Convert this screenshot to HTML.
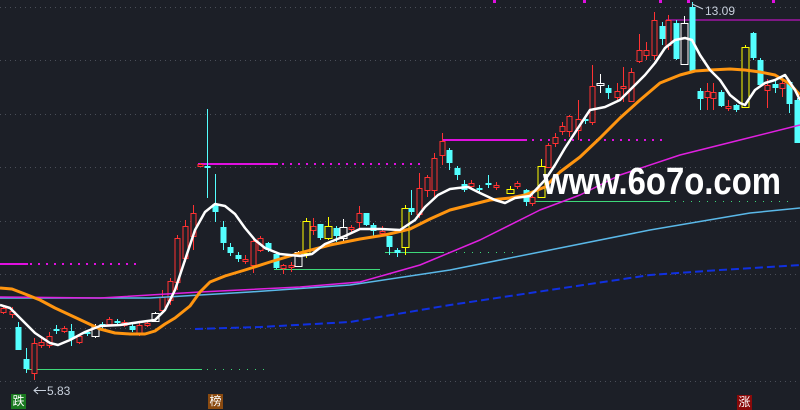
<!DOCTYPE html>
<html><head><meta charset="utf-8"><style>
html,body{margin:0;padding:0;background:#1c1f27;width:800px;height:410px;overflow:hidden}
svg{display:block}
.lb{position:absolute;font:12px "Liberation Sans","Noto Sans CJK SC",sans-serif;color:#fff;width:15px;height:15px;line-height:15px;text-align:center}
</style></head><body>
<svg id="s" width="800" height="410" viewBox="0 0 800 410" xmlns="http://www.w3.org/2000/svg" shape-rendering="crispEdges">
<g stroke="#4a4e58" stroke-width="1" stroke-dasharray="1,4">
<line x1="0" y1="7.5" x2="800" y2="7.5"/><line x1="0" y1="60.5" x2="800" y2="60.5"/><line x1="0" y1="114.5" x2="800" y2="114.5"/><line x1="0" y1="167.5" x2="800" y2="167.5"/><line x1="0" y1="221.5" x2="800" y2="221.5"/><line x1="0" y1="274.5" x2="800" y2="274.5"/><line x1="0" y1="328.5" x2="800" y2="328.5"/><line x1="0" y1="381.5" x2="800" y2="381.5"/>
</g>
<g stroke-width="2" fill="none">
<line x1="0" y1="264" x2="28" y2="264" stroke="#e010e0"/>
<line x1="30" y1="264" x2="140" y2="264" stroke="#e010e0" stroke-dasharray="2,6"/>
<line x1="198" y1="164" x2="278" y2="164" stroke="#e010e0"/>
<line x1="282" y1="164" x2="420" y2="164" stroke="#e010e0" stroke-dasharray="2,6"/>
<line x1="442" y1="140" x2="527" y2="140" stroke="#e010e0"/>
<line x1="532" y1="140" x2="662" y2="140" stroke="#e010e0" stroke-dasharray="2,6"/>
<line x1="666" y1="20" x2="800" y2="20" stroke="#e010e0" stroke-width="1"/>
</g>
<g stroke-width="1" fill="none">
<line x1="26" y1="369.5" x2="202" y2="369.5" stroke="#3ed87a"/>
<line x1="207" y1="369.5" x2="270" y2="369.5" stroke="#3ed87a" stroke-dasharray="1,7"/>
<line x1="274" y1="269.5" x2="380" y2="269.5" stroke="#3ed87a"/>
<line x1="385" y1="252.5" x2="444" y2="252.5" stroke="#3ed87a"/>
<line x1="448" y1="252.5" x2="520" y2="252.5" stroke="#3ed87a" stroke-dasharray="1,7"/>
<line x1="530" y1="201.5" x2="670" y2="201.5" stroke="#3ed87a"/>
<line x1="675" y1="201.5" x2="790" y2="201.5" stroke="#3ed87a" stroke-dasharray="1,7"/>
</g>
<g id="cd"></g>
<g fill="none" stroke-linejoin="round" shape-rendering="auto">
<polyline stroke="#1030e0" stroke-width="2" stroke-dasharray="8,4" points="195,329 260,327 350,322 450,305 550,290 650,275 720,270 800,265"/>
<polyline stroke="#5ab8e8" stroke-width="1.5" points="0,298 150,298 250,292 350,285 450,270 550,250 650,230 750,213 800,208"/>
<polyline stroke="#e020e0" stroke-width="1.5" points="0,297 100,298 200,292 300,287 360,282 420,265 480,240 540,210 580,195 620,175 680,155 740,140 800,125"/>
<polyline stroke="#ff9510" stroke-width="3" points="0,288 12,289 25,294 40,300 55,308 70,315 85,322 100,329 115,333 130,334 145,334 155,331 165,324 175,318 190,306 200,292 210,282 225,276 245,270 270,262 300,253 330,245 360,239 385,235 410,229 430,219 450,210 470,205 490,200 510,198 525,195 545,187 560,172 580,157 600,138 620,118 640,100 660,83 680,75 695,71 710,70 730,69 745,70 760,72 775,75 790,84 800,95"/>
<polyline stroke="#ffffff" stroke-width="2.5" points="0,305 10,308 20,318 35,333 50,343 58,345 70,340 85,332 100,326 120,325 140,322 155,320 165,310 175,290 185,260 195,230 205,212 215,204 225,206 235,214 245,228 255,240 265,248 280,254 300,256 312,254 325,244 345,236 360,229 380,229 400,230 415,220 425,207 438,195 450,189 458,188 468,187 480,193 495,200 505,203 515,198 530,196 545,180 555,165 565,148 580,125 590,110 605,107 620,100 635,85 645,75 655,63 665,48 675,40 685,38 692,40 700,55 710,70 720,80 730,95 740,103 745,105 755,90 765,83 775,80 785,75 795,90 800,100"/>
</g>
<g shape-rendering="auto">
<text x="543" y="194" fill="#ffffff" font-family="'Liberation Sans',sans-serif" font-weight="bold" font-size="38" textLength="238" lengthAdjust="spacingAndGlyphs">www.6o7o.com</text>
<text x="705" y="15" fill="#c8d0dc" font-family="'Liberation Sans',sans-serif" font-size="12">13.09</text>
<polyline points="692,4 703,9" stroke="#c8d0dc" fill="none"/>
<text x="47" y="395" fill="#c8d0dc" font-family="'Liberation Sans',sans-serif" font-size="12">5.83</text>
<line x1="34" y1="390.5" x2="46" y2="390.5" stroke="#c8d0dc"/>
<polyline points="38,387 34,390.5 38,394" stroke="#c8d0dc" fill="none"/>
</g>
<g fill="#e010e0"><rect x="493" y="0" width="3" height="3"/><rect x="583" y="0" width="3" height="3"/><rect x="659" y="0" width="3" height="3"/><rect x="687" y="0" width="3" height="3"/><rect x="772" y="0" width="3" height="3"/></g>
</svg>
<div class="lb" style="left:11px;top:394px;background:#1a7a20">跌</div>
<div class="lb" style="left:208px;top:394px;background:#8a4a10">榜</div>
<div class="lb" style="left:737px;top:395px;background:#8a0a0a">涨</div>
<script>
var d=[
[3,308,312,306,314,'r'],[12,311,314,307,318,'r'],[18,327,350,322,350,'c'],[26,359,369,348,373,'c'],[34,343,373,338,380,'r'],
[41,342,345,338,348,'r'],[49,336,345,332,348,'r'],[56,329,331,325,334,'c'],[64,328,331,326,333,'r'],[71,331,339,324,346,'c'],
[79,336,342,334,344,'r'],[87,332,334,330,336,'c'],[95,326,336,324,338,'w'],[102,324,326,322,329,'c'],[109,319,324,317,326,'r'],
[117,321,323,319,326,'c'],[124,322,325,320,327,'r'],[132,326,330,324,332,'c'],[139,325,334,322,336,'r'],[147,323,325,321,327,'r'],
[155,313,321,312,322,'w'],[162,297,310,290,314,'r'],[170,281,300,278,305,'r'],[177,238,282,235,290,'r'],[185,226,258,220,262,'r'],
[193,213,236,205,250,'r'],[200,164,166,163,167,'r'],[207,166,168,109,198,'c'],[215,204,212,174,222,'c'],[223,227,243,221,250,'c'],
[230,247,253,243,256,'c'],[238,255,259,252,262,'c'],[245,259,261,255,264,'r'],[253,241,265,237,273,'r'],[260,238,250,236,252,'r'],
[268,243,250,242,252,'c'],[276,254,268,252,269,'c'],[283,265,268,264,274,'r'],[291,265,267,262,272,'r'],[298,252,266,251,267,'w'],
[306,221,253,218,258,'y'],[313,226,230,218,235,'r'],[320,224,238,224,240,'c'],[328,226,238,217,240,'y'],[336,228,236,226,242,'c'],
[343,227,238,219,242,'w'],[351,227,229,225,232,'r'],[359,213,222,206,228,'r'],[366,213,225,213,226,'c'],[373,225,231,223,238,'c'],
[382,231,233,226,236,'r'],[389,236,247,236,255,'c'],[397,250,253,248,257,'c'],[405,208,247,205,255,'y'],[411,208,212,190,215,'c'],
[419,188,214,173,218,'r'],[427,177,190,175,197,'r'],[434,158,190,153,197,'r'],[442,141,155,133,165,'r'],[449,150,163,148,170,'c'],
[457,168,175,166,180,'c'],[464,184,190,180,192,'c'],[471,183,186,180,189,'r'],[479,188,190,185,193,'c'],[488,183,185,175,188,'c'],
[496,185,187,182,190,'r'],[510,189,193,186,194,'y'],[517,183,186,181,189,'r'],[526,190,202,189,206,'c'],[532,197,203,195,206,'r'],
[541,166,197,159,197,'y'],[548,145,167,143,168,'r'],[555,137,143,133,147,'r'],[562,126,131,122,135,'r'],[569,116,131,115,137,'r'],
[578,119,130,100,140,'r'],[585,119,121,116,124,'c'],[592,86,122,65,125,'r'],[600,83,85,74,93,'w'],[608,88,93,85,99,'c'],
[617,91,97,83,102,'r'],[623,86,88,67,102,'r'],[631,72,101,68,101,'r'],[639,50,61,34,63,'r'],[646,50,55,42,60,'r'],
[654,20,55,12,60,'r'],[662,26,39,22,45,'c'],[668,20,45,15,50,'r'],[676,23,59,20,60,'c'],[684,23,64,16,65,'w'],
[692,7,71,2,72,'c'],[700,91,99,88,110,'c'],[707,91,97,83,110,'r'],[713,92,98,83,110,'r'],[721,92,106,90,107,'c'],
[728,106,108,100,111,'r'],[736,105,110,104,112,'c'],[745,47,107,45,108,'y'],[753,33,58,32,60,'c'],[760,60,85,58,86,'c'],
[767,85,90,79,108,'r'],[775,84,88,80,93,'c'],[782,83,88,80,97,'r'],[789,82,104,80,113,'c'],[797,100,143,98,143,'c']];
var col={r:'#ff3232',c:'#54ffff',w:'#ffffff',y:'#ffff00'};var h='';
d.forEach(function(a){var x=a[0],t=a[1],b=a[2],hi=a[3],lo=a[4],k=a[5],c=col[k];var w=(k=='y'||k=='w')?8:6;
h+='<line x1="'+(x+.5)+'" y1="'+hi+'" x2="'+(x+.5)+'" y2="'+lo+'" stroke="'+c+'"/>';
if(k=='c')h+='<rect x="'+(x-w/2+.5)+'" y="'+t+'" width="'+w+'" height="'+Math.max(1,b-t)+'" fill="'+c+'"/>';
else h+='<rect x="'+(x-w/2+1)+'" y="'+(t+.5)+'" width="'+(w-1)+'" height="'+Math.max(1,b-t)+'" fill="#1c1f27" stroke="'+c+'" stroke-width="1.3"/>';});
document.getElementById('cd').innerHTML=h;
</script>
</body></html>
